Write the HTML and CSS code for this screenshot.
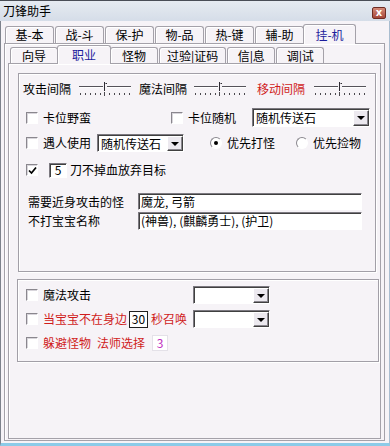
FILE: index.html
```html
<!DOCTYPE html>
<html lang="zh-CN">
<head>
<meta charset="UTF-8">
<meta name="viewport" content="width=device-width, initial-scale=1.0">
<title>刀锋助手</title>
<link rel="stylesheet" href="styles.css">
</head>
<body>

<svg class="defs" width="0" height="0">
    <symbol id="slider" viewBox="0 0 54 18">
        <path d="M1 6.5H25M29 6.5H53" stroke="#55535a"/>
        <path d="M1 7.5H25M29 7.5H53" stroke="#fff"/>
        <path d="M26.5 2V11" stroke="#2e2c32"/>
        <path d="M27.5 3.5H29" stroke="#2e2c32"/>
        <path d="M2.5 13v2M7.5 13v2M12.5 13v2M17.5 13v2M22.5 13v2M26.5 12v4M31.5 13v2M36.5 13v2M41.5 13v2M46.5 13v2M51.5 13v2" stroke="#4a484e"/>
    </symbol>
</svg>

<div class="window">
    <div class="titlebar">
        <span>刀锋助手</span>
        <span class="close">x</span>
    </div>

    <div class="frame">
        <div class="tabs main-tabs">
            <div class="tab">基-本</div>
            <div class="tab">战-斗</div>
            <div class="tab">保-护</div>
            <div class="tab">物-品</div>
            <div class="tab">热-键</div>
            <div class="tab">辅-助</div>
            <div class="tab active">挂-机</div>
        </div>

        <div class="page outer-page">
            <div class="tabs sub-tabs">
                <div class="tab">向导</div>
                <div class="tab active">职业</div>
                <div class="tab">怪物</div>
                <div class="tab">过验|证码</div>
                <div class="tab">信|息</div>
                <div class="tab">调|试</div>
            </div>

            <div class="page inner-page">
                <div class="group group-main">
                    <div class="interval-row">
                        <span>攻击间隔</span>
                        <svg class="slider s1"><use href="#slider"/></svg>
                        <span class="l2">魔法间隔</span>
                        <svg class="slider s2"><use href="#slider"/></svg>
                        <span class="l3 red">移动间隔</span>
                        <svg class="slider s3"><use href="#slider"/></svg>
                    </div>

                    <div class="row row-2">
                        <span class="check"></span>
                        <span class="lbl">卡位野蛮</span>
                        <div class="right-part">
                            <span class="check"></span>
                            <span class="lbl">卡位随机</span>
                            <div class="combo combo-wide">
                                <span class="combo-value">随机传送石</span>
                                <span class="combo-btn"><i></i></span>
                            </div>
                        </div>
                    </div>

                    <div class="row row-3">
                        <span class="check"></span>
                        <span class="lbl">遇人使用</span>
                        <div class="combo combo-mid">
                            <span class="combo-value">随机传送石</span>
                            <span class="combo-btn"><i></i></span>
                        </div>
                        <span class="radio on r1"><i></i></span>
                        <span class="lbl">优先打怪</span>
                        <span class="radio r2"></span>
                        <span class="lbl">优先捡物</span>
                    </div>

                    <div class="row row-4">
                        <span class="check">
                            <svg width="9" height="9" viewBox="0 0 9 9"><polyline points="1,4.5 3.5,7 8,1.5" fill="none" stroke="#000" stroke-width="1.7"/></svg>
                        </span>
                        <span class="num num-5">5</span>
                        <span class="after-num">刀不掉血放弃目标</span>
                    </div>

                    <div class="field-row row-5">
                        <span>需要近身攻击的怪</span>
                        <span class="field">魔龙, 弓箭</span>
                    </div>
                    <div class="field-row row-6">
                        <span>不打宝宝名称</span>
                        <span class="field">(神兽), (麒麟勇士), (护卫)</span>
                    </div>
                </div>

                <div class="group group-extra">
                    <div class="opt-row">
                        <div class="opt-left">
                            <span class="check"></span>
                            <span class="lbl">魔法攻击</span>
                        </div>
                        <div class="combo">
                            <span class="combo-value"></span>
                            <span class="combo-btn"><i></i></span>
                        </div>
                    </div>
                    <div class="opt-row">
                        <div class="opt-left">
                            <span class="check"></span>
                            <span class="lbl red">当宝宝不在身边</span>
                            <span class="num num-30">30</span>
                            <span class="red sec">秒召唤</span>
                        </div>
                        <div class="combo">
                            <span class="combo-value"></span>
                            <span class="combo-btn"><i></i></span>
                        </div>
                    </div>
                    <div class="opt-row short">
                        <div class="opt-left">
                            <span class="check"></span>
                            <span class="lbl red">躲避怪物</span>
                            <span class="red mage">法师选择</span>
                            <span class="num num-3">3</span>
                        </div>
                    </div>
                </div>
            </div>
        </div>
    </div>
</div>

</body>
</html>
```

FILE: styles.css
```css
* {
    box-sizing: border-box;
}

body {
    margin: 0;
    font-family: "Noto Sans CJK SC", "Noto Sans", sans-serif;
    font-size: 12px;
    line-height: 1;
    color: #000;
    background-color: #f6f3f7;
}

.defs {
    position: absolute;
}

.window {
    width: 390px;
    height: 446px;
    display: flex;
    flex-direction: column;
    background-color: #f6f3f7;
}

.titlebar {
    height: 21px;
    display: flex;
    align-items: center;
    justify-content: space-between;
    padding: 0 4px 0 3px;
    border-top: 1px solid #4a4e56;
    background: linear-gradient(#e6ebf1, #d5dde8);
}

.close {
    width: 14px;
    height: 12px;
    margin-top: 3px;
    border: 1px solid #6e2c22;
    border-radius: 2px;
    background: linear-gradient(#d58b78, #a6473a);
    color: #fff;
    font: bold 10px/9px "DejaVu Sans", sans-serif;
    text-align: center;
}

.frame {
    flex: 1;
    display: flex;
    flex-direction: column;
    padding: 0 4px 2px 3px;
    border-left: 1px solid #7d828c;
    border-right: 1px solid #a9bdd0;
    border-bottom: 3px solid #8ccbe8;
}

/* tabs */
.tabs {
    display: flex;
    align-items: flex-end;
    gap: 1px;
}

.main-tabs {
    height: 22px;
    padding-left: 1px;
}

.tab {
    height: 17px;
    display: flex;
    align-items: center;
    justify-content: center;
    border: 1px solid #a4a1a9;
    border-bottom: 0;
    border-radius: 3px 3px 0 0;
    box-shadow: inset 1px 1px #fff;
    background-color: #f6f3f7;
    white-space: nowrap;
}

.main-tabs .tab {
    width: 49px;
}

.tab.active {
    height: 20px;
    margin: 0 -2px -1px;
    color: #1c1c9c;
    position: relative;
    z-index: 1;
}

.main-tabs .tab.active {
    width: 53px;
}

.sub-tabs {
    height: 19px;
    padding-left: 2px;
}

.sub-tabs .tab {
    height: 16px;
    min-width: 48px;
    padding: 0 7px;
}

.sub-tabs .tab.active {
    height: 19px;
    min-width: 54px;
}

/* pages */
.page {
    border: 1px solid #a4a1a9;
    background-color: #f6f3f7;
    box-shadow: inset 1px 1px #fff;
}

.outer-page {
    flex: 1;
    display: flex;
    flex-direction: column;
    padding: 0 3px 1px 3px;
}

.inner-page {
    flex: 1;
}

.group {
    border: 1px solid #a29fa7;
    box-shadow: inset 1px 1px #fff, 1px 1px #fff;
}

.group-main {
    height: 199px;
    margin: 9px 4px 0 9px;
    padding-top: 5px;
}

.group-extra {
    height: 83px;
    margin: 7px 1px 0 8px;
    padding: 6px 0 0 8px;
}

.red {
    color: #d01c1c;
}

/* interval sliders */
.interval-row {
    height: 19px;
    display: flex;
    align-items: center;
    padding-left: 4px;
}

.slider {
    width: 54px;
    height: 18px;
}

.s1 { margin-left: 7px; }
.l2 { margin-left: 7px; }
.s2 { margin-left: 6px; }
.l3 { margin-left: 10px; }
.s3 { margin-left: 8px; }

/* option rows */
.row {
    display: flex;
    align-items: center;
    padding-left: 7px;
}

.row-2 {
    height: 19px;
    margin-top: 10px;
    padding-right: 5px;
}

.row-3 {
    height: 18px;
    margin-top: 7px;
}

.row-4 {
    height: 18px;
    margin-top: 9px;
}

.lbl {
    margin-left: 5px;
}

.right-part {
    margin-left: auto;
    display: flex;
    align-items: center;
    height: 100%;
}

.check {
    width: 12px;
    height: 12px;
    flex-shrink: 0;
    display: flex;
    align-items: center;
    justify-content: center;
    border: 1px solid;
    border-color: #8a878e #fff #fff #8a878e;
    box-shadow: inset 1px 1px #d8d5db;
    background-color: #fff;
}

.radio {
    width: 12px;
    height: 12px;
    display: flex;
    align-items: center;
    justify-content: center;
    border: 1px solid;
    border-color: #8a878e #fff #fff #8a878e;
    border-radius: 50%;
    background-color: #fff;
}

.radio.on i {
    width: 4px;
    height: 4px;
    border-radius: 50%;
    background-color: #000;
}

.r1 { margin-left: 26px; }
.r2 { margin-left: 21px; }

/* combo boxes */
.combo {
    width: 77px;
    height: 18px;
    display: flex;
    padding: 1px 0 0 1px;
    border: 1px solid;
    border-color: #7c7980 #fff #fff #7c7980;
    box-shadow: inset 1px 1px #404040;
    background-color: #fff;
}

.combo-wide {
    width: 118px;
    height: 19px;
    margin-left: 16px;
}

.combo-mid {
    width: 87px;
    margin-left: 6px;
}

.combo-value {
    flex: 1;
    display: flex;
    align-items: center;
    padding-left: 2px;
}

.combo-btn {
    width: 16px;
    display: flex;
    align-items: center;
    justify-content: center;
    border: 1px solid;
    border-color: #fff #404040 #404040 #fff;
    box-shadow: inset -1px -1px #8a878e;
    background-color: #ece9ef;
}

.combo-btn i {
    width: 0;
    height: 0;
    border-left: 4px solid transparent;
    border-right: 4px solid transparent;
    border-top: 4px solid #000;
}

/* small number boxes */
.num {
    display: flex;
    align-items: center;
    justify-content: center;
    background-color: #fff;
}

.num-5 {
    width: 18px;
    height: 15px;
    margin-left: 11px;
    border: 1px solid;
    border-color: #7c7980 #fff #fff #7c7980;
    box-shadow: inset 1px 1px #404040;
}

.after-num {
    margin-left: 3px;
}

.num-30 {
    width: 19px;
    height: 17px;
    margin-left: 2px;
    border: 1px solid #202020;
}

.sec {
    margin-left: 3px;
}

.mage {
    margin-left: 6px;
}

.num-3 {
    width: 16px;
    height: 16px;
    margin-left: 7px;
    border: 1px solid #e4e1e8;
    color: #c030c0;
}

/* text fields */
.field-row {
    display: grid;
    grid-template-columns: 110px 224px;
    align-items: center;
    padding-left: 9px;
}

.row-5 {
    height: 17px;
    margin-top: 14px;
}

.row-6 {
    height: 18px;
    margin-top: 2px;
}

.field {
    height: 100%;
    display: flex;
    align-items: center;
    padding-left: 2px;
    border: 1px solid;
    border-color: #7c7980 #fff #fff #7c7980;
    box-shadow: inset 1px 1px #404040;
    background-color: #fff;
    white-space: nowrap;
}

/* lower group */
.opt-row {
    height: 18px;
    display: grid;
    grid-template-columns: 167px 77px;
    margin-bottom: 6px;
}

.opt-row.short {
    height: 17px;
}

.opt-left {
    display: flex;
    align-items: center;
}
```
